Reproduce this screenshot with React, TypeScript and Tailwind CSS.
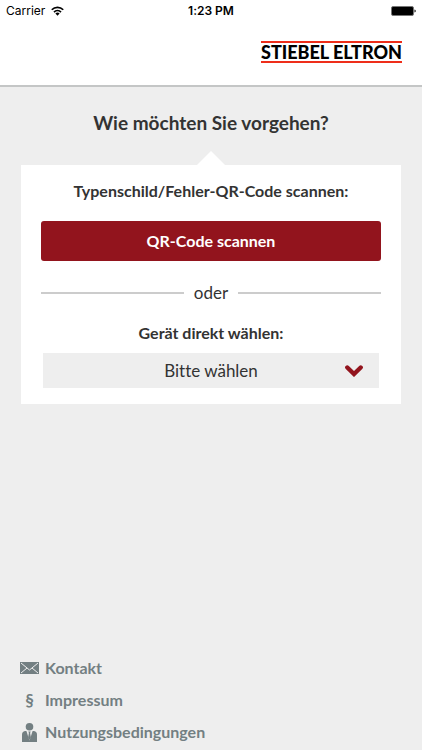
import { useState } from 'react'

const devices = ['Wärmepumpe', 'Durchlauferhitzer', 'Lüftungsgerät']

function StatusBar() {
  return (
    <div className="grid h-[22px] grid-cols-3 items-center px-1.5 font-[Inter,sans-serif] text-[12px] leading-5 text-black">
      <div className="flex items-center gap-1.5">
        <span>Carrier</span>
        <svg className="h-[10px] w-[13px]" viewBox="0 0 26 20" fill="none" stroke="currentColor" strokeWidth="3.4">
          <path d="M1.500 7.500a16.300 16.300 0 0 1 23 0" />
          <path d="M6 12.300a10 10 0 0 1 14 0" />
          <path d="M13 19.500l-4.200-4.400a6 6 0 0 1 8.400 0z" fill="currentColor" stroke="none" />
        </svg>
      </div>
      <span className="text-center font-semibold">1:23 PM</span>
      <svg className="h-[10px] w-[25px] justify-self-end" viewBox="0 0 25 10">
        <rect x="0.5" y="0.5" width="22" height="9" rx="1.5" fill="#000" stroke="#777" />
        <path d="M23.5 3.5c1.6 0 1.6 3 0 3z" fill="#000" />
      </svg>
    </div>
  )
}

function Logo() {
  return (
    <a
      href="#"
      className="block border-y-2 border-[#ee2e1a] text-center font-[Lato,sans-serif] text-[18px] leading-[18px] font-black whitespace-nowrap text-black"
    >
      STIEBEL ELTRON
    </a>
  )
}

function MailIcon() {
  return (
    <svg className="h-3 w-[19px]" viewBox="0 0 19 12">
      <rect width="19" height="12" fill="#737f82" />
      <path d="M1 1l8.500 7L18 1M1 11l6-5M18 11l-6-5" fill="none" stroke="#eee" strokeWidth="1" />
    </svg>
  )
}

function PersonIcon() {
  return (
    <svg className="h-[19px] w-[15px]" viewBox="0 0 15 19">
      <circle cx="7.5" cy="3.8" r="3.8" fill="#737f82" />
      <path d="M3 8h9c2 .5 3 1.800 3 3.500V19H0v-7.500C0 9.800 1 8.500 3 8z" fill="#737f82" />
      <path d="M4.400 8l3.100 9.500L10.600 8z" fill="#eee" />
      <path d="M6.300 8.500h2.400l-.6 1.500.8 4.500-1.400 2.500-1.400-2.500.8-4.500z" fill="#737f82" />
    </svg>
  )
}

const links = [
  { label: 'Kontakt', icon: <MailIcon /> },
  { label: 'Impressum', icon: <span className="text-[17px] leading-6">§</span> },
  { label: 'Nutzungsbedingungen', icon: <PersonIcon /> },
]

export default function App() {
  const [device, setDevice] = useState('')

  return (
    <div className="flex min-h-screen flex-col bg-[#eee] font-[Lato,'Noto_Sans',sans-serif] text-[#333] [font-variant-ligatures:none]">
      <header className="border-b-2 border-[#c4c6c6] bg-white">
        <StatusBar />
        <div className="flex justify-end px-5 pt-[19px] pb-[22px]">
          <Logo />
        </div>
      </header>

      <main className="flex flex-1 flex-col px-[21px] pt-[22px]">
        <h1 className="text-center text-[19px] leading-7 font-bold">Wie möchten Sie vorgehen?</h1>

        <svg className="mt-3.5 h-3.5 w-7 self-center" viewBox="0 0 28 14">
          <path d="M14 0l14 14H0z" fill="#fff" />
        </svg>
        <section className="bg-white px-5 pt-3.5 pb-4 text-center">
          <h2 className="text-[16px] leading-6 font-bold">Typenschild/Fehler-QR-Code scannen:</h2>
          <button
            type="button"
            className="mt-[18px] h-10 w-full rounded-[3px] bg-[#92141d] text-[16px] leading-6 font-bold text-white"
          >
            QR-Code scannen
          </button>

          <div className="mt-5 flex items-center gap-2.5">
            <div className="h-0.5 flex-1 bg-[#ccc]" />
            <span className="text-[17px] leading-6">oder</span>
            <div className="h-0.5 flex-1 bg-[#ccc]" />
          </div>

          <label htmlFor="device" className="mt-4 block text-[16px] leading-6 font-bold">
            Gerät direkt wählen:
          </label>
          <div className="relative mx-0.5 mt-2">
            <select
              id="device"
              value={device}
              onChange={(e) => setDevice(e.target.value)}
              className="block h-[35px] w-full appearance-none bg-[#eee] text-center text-[17px] leading-6"
            >
              <option value="">Bitte wählen</option>
              {devices.map((name) => (
                <option key={name} value={name}>
                  {name}
                </option>
              ))}
            </select>
            <svg
              className="pointer-events-none absolute top-3 right-4 h-3 w-[18px]"
              viewBox="0 0 18 12"
              fill="none"
              stroke="#92141d"
              strokeWidth="4.4"
            >
              <path d="M2.300 2.500L9 9l6.700-6.500" strokeLinecap="round" />
            </svg>
          </div>
        </section>
      </main>

      <footer className="px-5 pb-1.5 text-[16px] leading-6 font-bold text-[#737f82]">
        <nav className="flex flex-col items-start gap-2">
          {links.map((link) => (
            <a key={link.label} href="#" className="flex items-center gap-1.5">
              <span className="flex h-6 w-[19px] items-center justify-center">{link.icon}</span>
              {link.label}
            </a>
          ))}
        </nav>
      </footer>
    </div>
  )
}
